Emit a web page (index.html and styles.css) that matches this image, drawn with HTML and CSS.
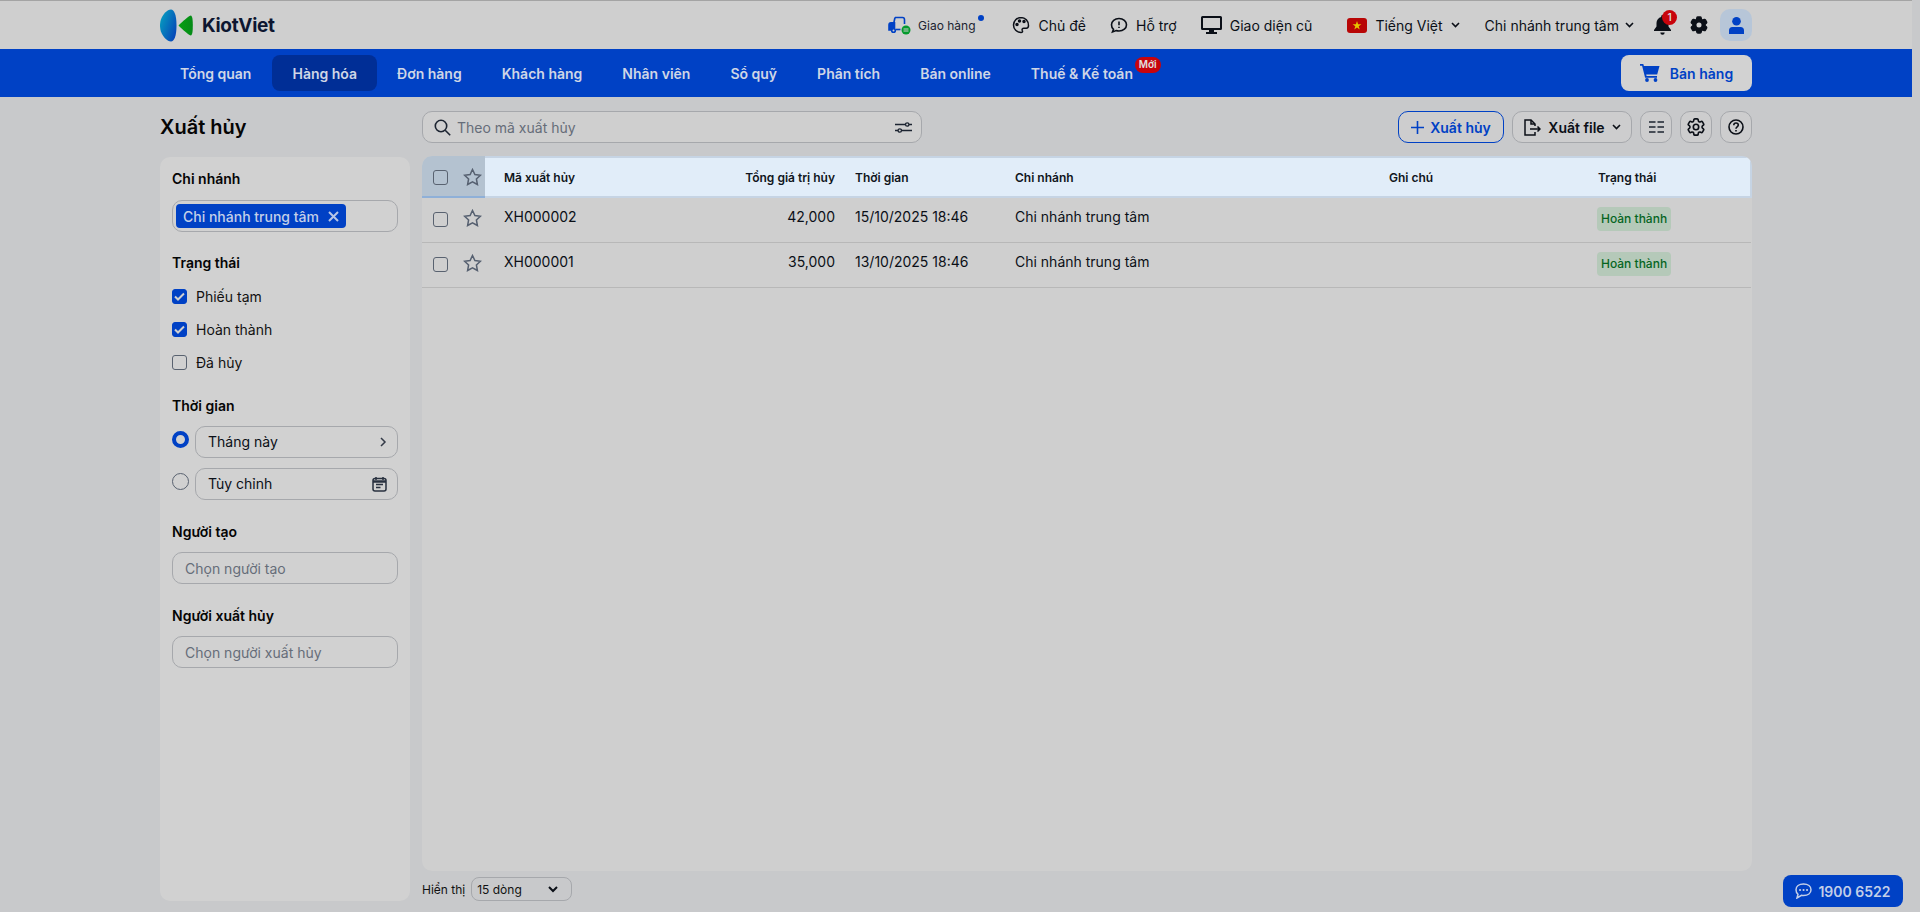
FILE: index.html
```html
<!DOCTYPE html>
<html lang="vi">
<head>
<meta charset="utf-8">
<title>Xuất hủy</title>
<link rel="stylesheet" href="styles.css">
</head>
<body>
<div class="app">
  <header class="top">
    <div class="logo">
      <svg width="33" height="33" viewBox="0 0 33 33"><defs><linearGradient id="lg" x1="0" y1="0" x2="1" y2="0.700"><stop offset="0" stop-color="#06a6c0"/><stop offset="1" stop-color="#0648b8"/></linearGradient><linearGradient id="lg2" x1="0" y1="0" x2="1" y2="0"><stop offset="0" stop-color="#05a010"/><stop offset="1" stop-color="#068a18"/></linearGradient></defs><path d="M11 .5C14 1 16.500 5 16.500 16.500S14 32 11 32.500C7 32.500 3.500 28 1.500 24-.5 20-.5 13 1.500 9 3.500 5 7 .5 11 .5Z" fill="url(#lg)"/><path d="M31 6.500C32.500 7.500 32.800 11 32.800 16.500S32.500 25.500 31 26.500C29 26.500 22 20 18.500 16.500 22 13 29 6.500 31 6.500Z" fill="url(#lg2)"/></svg>
      <span class="logo-name">KiotViet</span>
    </div>
    <div class="top-tools">
      <a class="tool tool-ship">
        <svg width="23" height="20" viewBox="0 0 23 20" fill="none" stroke="#0041c5" stroke-width="1.600"><path d="M7 2.500h7.500c1.300 0 2 .8 2 2.200V9"/><path d="M7 2.500 5.800 8"/><path d="M1 10c0-1.300.7-2.200 2-2.200h3.500V15H1Z" fill="#0041c5"/><path d="M8 14.500h4.500"/><circle cx="5.500" cy="15.500" r="1.800" fill="#cfcfcf"/><circle cx="18" cy="15" r="4.500" fill="#039a2c" stroke="none"/><path d="M15.500 14h5M15.500 16h5" stroke="#cfcfcf" stroke-width="1"/></svg>
        <span class="ship-text">Giao hàng</span><i class="ship-dot"></i>
      </a>
      <a class="tool tool-theme">
        <svg width="18" height="18" viewBox="0 0 18 18" fill="none" stroke="#0b0f17" stroke-width="1.500"><path d="M9 1.500a7.500 7.500 0 1 0 0 15c1.500 0 1.800-1 1.300-2-.6-1.300.2-2.300 1.500-2.300h2.500c1.300 0 2.200-1 2.200-2.700C16.500 5 13.300 1.500 9 1.500Z"/><circle cx="5" cy="8.500" r="1" fill="#0b0f17"/><circle cx="7.500" cy="5" r="1" fill="#0b0f17"/><circle cx="12" cy="5.500" r="1" fill="#0b0f17"/></svg>
        <span>Chủ đề</span>
      </a>
      <a class="tool tool-help">
        <svg width="18" height="18" viewBox="0 0 18 18" fill="none" stroke="#0b0f17" stroke-width="1.600"><path d="M9 2.500c4.300 0 7.500 2.700 7.500 6.200S13.300 15 9 15c-1 0-2-.2-2.800-.4L2.500 16l1-2.700C2 12.100 1.500 10.500 1.500 8.700c0-3.500 3.200-6.200 7.500-6.200Z"/><path d="M9 5.500v3.800M9 10.800v1.300"/></svg>
        <span>Hỗ trợ</span>
      </a>
      <a class="tool tool-old">
        <svg width="21" height="18" viewBox="0 0 21 18" fill="#0b0f17"><path d="M1.500 0h18A1.500 1.500 0 0 1 21 1.500v11a1.500 1.500 0 0 1-1.500 1.500h-18A1.500 1.500 0 0 1 0 12.500v-11A1.500 1.500 0 0 1 1.500 0Zm.5 2v10h17V2Z"/><path d="M8 14h5v2h3v2H5v-2h3Z"/></svg>
        <span>Giao diện cũ</span>
      </a>
      <a class="tool tool-lang">
        <svg class="flag" width="20" height="15" viewBox="0 0 20 15"><rect width="20" height="15" rx="3" fill="#b80606"/><path d="m10 3 1.100 3.200h3.300l-2.700 2 1 3.200-2.700-2-2.700 2 1-3.200-2.700-2h3.300Z" fill="#e6c400"/></svg>
        <span>Tiếng Việt</span>
        <svg class="chev" width="9" height="6" viewBox="0 0 9 6" fill="none" stroke="#0b0f17" stroke-width="1.600"><path d="m1 1 3.500 3.500L8 1"/></svg>
      </a>
      <a class="tool tool-branch">
        <span>Chi nhánh trung tâm</span>
        <svg class="chev" width="9" height="6" viewBox="0 0 9 6" fill="none" stroke="#0b0f17" stroke-width="1.600"><path d="m1 1 3.500 3.500L8 1"/></svg>
      </a>
      <a class="bell">
        <svg width="17" height="20" viewBox="0 0 17 20" fill="#0b0f17"><path d="M8.500 0c.8 0 1.300.6 1.300 1.300v.6C12.600 2.500 14.500 5 14.500 8v3.500L17 15v1H0v-1l2.500-3.500V8c0-3 1.900-5.500 4.700-6.100v-.6C7.200.6 7.700 0 8.500 0ZM6.300 17.500h4.400a2.200 2.200 0 0 1-4.400 0Z"/></svg>
        <b class="bell-badge">1</b>
      </a>
      <svg class="gear" width="18" height="18" viewBox="2 2 20 20" fill="#0b0f17" stroke="#0b0f17" stroke-width="1.500"><path d="M9.594 3.940c.09-.542.56-.94 1.110-.94h2.593c.55 0 1.020.398 1.110.94l.213 1.281c.063.374.313.686.645.870.074.040.147.083.220.127.324.196.720.257 1.075.124l1.217-.456a1.125 1.125 0 011.370.490l1.296 2.247a1.125 1.125 0 01-.260 1.431l-1.003.827c-.293.240-.438.613-.431.992a6.759 6.759 0 010 .255c-.007.378.138.750.430.990l1.005.828c.424.350.534.954.260 1.430l-1.298 2.247a1.125 1.125 0 01-1.369.491l-1.217-.456c-.355-.133-.750-.072-1.076.124a6.570 6.570 0 01-.220.128c-.331.183-.581.495-.644.869l-.213 1.280c-.090.543-.560.941-1.110.941h-2.594c-.550 0-1.020-.398-1.110-.940l-.213-1.281c-.062-.374-.312-.686-.644-.870a6.520 6.520 0 01-.220-.127c-.325-.196-.720-.257-1.076-.124l-1.217.456a1.125 1.125 0 01-1.369-.490l-1.297-2.247a1.125 1.125 0 01.260-1.431l1.004-.827c.292-.240.437-.613.430-.992a6.932 6.932 0 010-.255c.007-.378-.138-.750-.430-.990l-1.004-.828a1.125 1.125 0 01-.260-1.430l1.297-2.247a1.125 1.125 0 011.370-.491l1.216.456c.356.133.751.072 1.076-.124.072-.044.146-.087.220-.128.332-.183.582-.495.644-.869l.214-1.281z"/><circle cx="12" cy="12" r="2.800" fill="#cfcfcf" stroke="none"/></svg>
      <a class="avatar">
        <svg width="15" height="17" viewBox="0 0 15 17" fill="#0041c5"><circle cx="7.500" cy="4.300" r="4.300"/><path d="M3.500 10h8a3.500 3.500 0 0 1 3.500 3.500V17H0v-3.500A3.500 3.500 0 0 1 3.500 10Z"/></svg>
      </a>
    </div>
  </header>

  <nav class="menu">
    <div class="menu-items">
      <a class="menu-item menu-first">Tổng quan</a>
      <a class="menu-item is-active">Hàng hóa</a>
      <a class="menu-item">Đơn hàng</a>
      <a class="menu-item">Khách hàng</a>
      <a class="menu-item">Nhân viên</a>
      <a class="menu-item">Sổ quỹ</a>
      <a class="menu-item">Phân tích</a>
      <a class="menu-item">Bán online</a>
      <a class="menu-item menu-tax">Thuế &amp; Kế toán<b class="new-badge">Mới</b></a>
    </div>
    <a class="sell-btn">
      <svg width="20" height="18" viewBox="0 0 20 18" fill="#0041c5"><path d="M0 0h3.300l.6 2H19.500l-2.300 8.500H6.200l.4 1.600h10.400v1.700H5.100L2.100 1.700H0Z"/><circle cx="7" cy="16" r="1.900"/><circle cx="15.500" cy="16" r="1.900"/></svg>
      <span>Bán hàng</span>
    </a>
  </nav>

  <main class="page">
    <aside class="side-col">
      <h1 class="title">Xuất hủy</h1>
      <div class="filters">
        <section class="group group-branch">
          <h3 class="label">Chi nhánh</h3>
          <div class="field field-chip">
            <span class="chip">Chi nhánh trung tâm
              <svg width="11" height="11" viewBox="0 0 11 11" fill="none" stroke="#b7c6e6" stroke-width="2"><path d="m1 1 9 9M10 1l-9 9"/></svg>
            </span>
          </div>
        </section>
        <section class="group group-status">
          <h3 class="label">Trạng thái</h3>
          <label class="check"><span class="box is-on"><svg width="11" height="9" viewBox="0 0 11 9" fill="none" stroke="#d0d0d0" stroke-width="2"><path d="m1 4.500 3 3 6-6"/></svg></span>Phiếu tạm</label>
          <label class="check"><span class="box is-on"><svg width="11" height="9" viewBox="0 0 11 9" fill="none" stroke="#d0d0d0" stroke-width="2"><path d="m1 4.500 3 3 6-6"/></svg></span>Hoàn thành</label>
          <label class="check"><span class="box"></span>Đã hủy</label>
        </section>
        <section class="group group-time">
          <h3 class="label">Thời gian</h3>
          <div class="time-row">
            <span class="radio is-on"></span>
            <div class="field field-time"><span>Tháng này</span>
              <svg width="7" height="10" viewBox="0 0 7 10" fill="none" stroke="#333a47" stroke-width="1.500"><path d="m1 1 4 4-4 4"/></svg>
            </div>
          </div>
          <div class="time-row">
            <span class="radio"></span>
            <div class="field field-time"><span>Tùy chỉnh</span>
              <svg width="15" height="16" viewBox="0 0 15 16" fill="none" stroke="#28313f" stroke-width="1.500"><rect x="1" y="2.500" width="13" height="12.500" rx="2"/><path d="M1 5.500h13" stroke-width="2.500"/><path d="M4 1v3M11 1v3" /><path d="M4 8.500h7M4 11.500h4.500" stroke-width="1.300"/></svg>
            </div>
          </div>
        </section>
        <section class="group group-user">
          <h3 class="label">Người tạo</h3>
          <div class="field field-input">Chọn người tạo</div>
        </section>
        <section class="group group-user">
          <h3 class="label">Người xuất hủy</h3>
          <div class="field field-input">Chọn người xuất hủy</div>
        </section>
      </div>
    </aside>

    <div class="content">
      <div class="toolbar">
        <div class="search">
          <svg width="17" height="17" viewBox="0 0 17 17" fill="none" stroke="#1c2431" stroke-width="1.600"><circle cx="7" cy="7" r="5.700"/><path d="m11.200 11.200 5 5"/></svg>
          <span class="search-text">Theo mã xuất hủy</span>
          <svg class="search-tune" width="17" height="13" viewBox="0 0 17 13" fill="none" stroke="#1c2431" stroke-width="1.300"><path d="M0 3.500h10.500M14 3.500h3M0 9.500h3M6.500 9.500H17"/><circle cx="12.200" cy="3.500" r="1.700"/><circle cx="4.800" cy="9.500" r="1.700"/></svg>
        </div>
        <div class="actions">
          <a class="btn btn-add">
            <svg width="13" height="13" viewBox="0 0 13 13" fill="none" stroke="#0041c5" stroke-width="1.600"><path d="M6.500 0v13M0 6.500h13"/></svg>
            Xuất hủy
          </a>
          <a class="btn btn-file">
            <svg width="18" height="17" viewBox="0 0 18 17" fill="none" stroke="#0b0f17" stroke-width="1.500"><path d="M12 7V5L8 1H2v15h10v-3"/><path d="M8 1v4h4"/><path d="M7 10h10M14.500 7.500 17 10l-2.500 2.500"/></svg>
            Xuất file
            <svg width="9" height="6" viewBox="0 0 9 6" fill="none" stroke="#0b0f17" stroke-width="1.600"><path d="m1 1 3.500 3.500L8 1"/></svg>
          </a>
          <a class="btn btn-icon">
            <svg width="15" height="12" viewBox="0 0 15 12" stroke="#1c2431" stroke-width="1.600"><path d="M0 1h6.500M8.500 1H15M0 6h6.500M8.500 6H15M0 11h6.500M8.500 11H15"/></svg>
          </a>
          <a class="btn btn-icon">
            <svg width="18" height="18" viewBox="2 2 20 20" fill="none" stroke="#0b0f17" stroke-width="1.800"><path d="M9.594 3.940c.09-.542.56-.94 1.110-.94h2.593c.55 0 1.020.398 1.110.94l.213 1.281c.063.374.313.686.645.870.074.040.147.083.220.127.324.196.720.257 1.075.124l1.217-.456a1.125 1.125 0 011.370.490l1.296 2.247a1.125 1.125 0 01-.260 1.431l-1.003.827c-.293.240-.438.613-.431.992a6.759 6.759 0 010 .255c-.007.378.138.750.430.990l1.005.828c.424.350.534.954.260 1.430l-1.298 2.247a1.125 1.125 0 01-1.369.491l-1.217-.456c-.355-.133-.750-.072-1.076.124a6.570 6.570 0 01-.220.128c-.331.183-.581.495-.644.869l-.213 1.280c-.090.543-.560.941-1.110.941h-2.594c-.550 0-1.020-.398-1.110-.940l-.213-1.281c-.062-.374-.312-.686-.644-.870a6.520 6.520 0 01-.220-.127c-.325-.196-.720-.257-1.076-.124l-1.217.456a1.125 1.125 0 01-1.369-.490l-1.297-2.247a1.125 1.125 0 01.260-1.431l1.004-.827c.292-.240.437-.613.430-.992a6.932 6.932 0 010-.255c.007-.378-.138-.750-.430-.990l-1.004-.828a1.125 1.125 0 01-.260-1.430l1.297-2.247a1.125 1.125 0 011.370-.491l1.216.456c.356.133.751.072 1.076-.124.072-.044.146-.087.220-.128.332-.183.582-.495.644-.869l.214-1.281z"/><circle cx="12" cy="12" r="3"/></svg>
          </a>
          <a class="btn btn-icon">
            <svg width="16" height="16" viewBox="0 0 16 16" fill="none" stroke="#0b0f17" stroke-width="1.600"><circle cx="8" cy="8" r="7"/><path d="M5.800 6.200C5.800 4.900 6.800 4 8 4s2.300.9 2.300 2.100c0 1.800-2.300 1.800-2.300 3.600M8 11v1.500"/></svg>
          </a>
        </div>
      </div>

      <div class="table-panel">
        <table class="grid">
          <colgroup>
            <col class="c-pick"><col class="c-code"><col class="c-total"><col class="c-time"><col class="c-branch"><col class="c-note"><col class="c-status">
          </colgroup>
          <thead>
            <tr>
              <th class="pick"><span class="pick-wrap"><span class="box"></span><svg width="19" height="18" viewBox="0 0 19 18" fill="none" stroke="#566070" stroke-width="1.500"><path d="m9.500 1.500 2.400 5 5.500.7-4 3.800 1 5.500-4.900-2.700-4.900 2.700 1-5.500-4-3.800 5.500-.7Z"/></svg></span></th>
              <th class="code">Mã xuất hủy</th>
              <th class="num">Tổng giá trị hủy</th>
              <th>Thời gian</th>
              <th>Chi nhánh</th>
              <th>Ghi chú</th>
              <th>Trạng thái</th>
            </tr>
          </thead>
          <tbody>
            <tr>
              <td class="pick"><span class="pick-wrap"><span class="box"></span><svg class="star" width="19" height="18" viewBox="0 0 19 18" fill="none" stroke="#566070" stroke-width="1.500"><path d="m9.500 1.500 2.400 5 5.500.7-4 3.800 1 5.500-4.900-2.700-4.900 2.700 1-5.500-4-3.800 5.500-.7Z"/></svg></span></td>
              <td class="code">XH000002</td>
              <td class="num">42,000</td>
              <td>15/10/2025 18:46</td>
              <td>Chi nhánh trung tâm</td>
              <td></td>
              <td class="status"><span class="tag">Hoàn thành</span></td>
            </tr>
            <tr>
              <td class="pick"><span class="pick-wrap"><span class="box"></span><svg class="star" width="19" height="18" viewBox="0 0 19 18" fill="none" stroke="#566070" stroke-width="1.500"><path d="m9.500 1.500 2.400 5 5.500.7-4 3.800 1 5.500-4.900-2.700-4.900 2.700 1-5.500-4-3.800 5.500-.7Z"/></svg></span></td>
              <td class="code">XH000001</td>
              <td class="num">35,000</td>
              <td>13/10/2025 18:46</td>
              <td>Chi nhánh trung tâm</td>
              <td></td>
              <td class="status"><span class="tag">Hoàn thành</span></td>
            </tr>
          </tbody>
        </table>
      </div>

      <div class="pager">
        <span>Hiển thị</span>
        <div class="page-size"><span>15 dòng</span>
          <svg width="10" height="7" viewBox="0 0 10 7" fill="none" stroke="#0b0f17" stroke-width="2"><path d="m1 1 4 4 4-4"/></svg>
        </div>
      </div>
    </div>
  </main>
</div>
<a class="hotline">
  <svg width="17" height="16" viewBox="0 0 17 16" fill="none" stroke="#c3cfe8" stroke-width="1.500"><path d="M8.500 1C13 1 16 3.500 16 6.800s-3 5.700-7.500 5.700c-.7 0-1.400-.1-2-.2L2 15l1-3.700C1.700 10.200 1 8.600 1 6.800 1 3.500 4 1 8.500 1Z"/><path d="M5 7h.1M8.500 7h.1M12 7h.1" stroke-width="2" stroke-linecap="round"/></svg>
  1900 6522
</a>
</body>
</html>
```
FILE: styles.css
```css
* { box-sizing: border-box; }
html, body { margin: 0; height: 100%; overflow: hidden; }
body {
  font-family: Inter, "Noto Sans", "Liberation Sans", sans-serif;
  font-size: 14px;
  color: #0b0f17;
  background: #c8c9cb;
}
h1, h3 { margin: 0; }
a { color: inherit; text-decoration: none; }

.app { width: 1912px; height: 912px; display: flex; flex-direction: column; }

/* top bar */
.top {
  height: 49px;
  flex: none;
  border-top: 1px solid #a4a4a4;
  background: #cfcfcf;
  padding: 0 160px;
  display: flex;
  align-items: center;
  justify-content: space-between;
}
.logo { display: flex; align-items: center; gap: 9px; }
.logo-name { font-size: 19px; font-weight: 700; color: #0d1630; letter-spacing: -.3px; }
.top-tools { display: flex; align-items: center; }
.tool { display: flex; align-items: center; gap: 8px; white-space: nowrap; font-size: 14px; }
.tool-ship { position: relative; gap: 7px; }
.ship-text { font-size: 12px; color: #1c2431; }
.ship-dot { position: absolute; right: -8px; top: 0; width: 6px; height: 6px; border-radius: 50%; background: #0041c5; }
.tool-theme { margin-left: 36px; gap: 9px; }
.tool-help { margin-left: 24px; }
.tool-old { margin-left: 24px; }
.tool-lang { margin-left: 35px; }
.tool-branch { margin-left: 25px; gap: 6px; }
.bell { position: relative; margin-left: 20px; display: flex; }
.bell-badge {
  position: absolute; left: 8px; top: -5px;
  width: 15px; height: 15px; border-radius: 50%;
  background: #c8040c; color: #d8d8d8;
  font-size: 10px; font-weight: 600; line-height: 15px; text-align: center;
}
.gear { margin-left: 19px; }
.avatar {
  margin-left: 12px; width: 32px; height: 32px; border-radius: 10px;
  background: #b7c6d8; display: flex; align-items: center; justify-content: center;
}

/* main menu */
.menu {
  height: 48px;
  flex: none;
  background: #0041c5;
  padding: 0 160px;
  display: flex;
  align-items: center;
  justify-content: space-between;
}
.menu-items { display: flex; align-items: center; }
.menu-item {
  height: 36px; padding: 0 20px; border-radius: 8px;
  display: flex; align-items: center;
  color: #cfd6e6; font-weight: 600; font-size: 14px; white-space: nowrap;
}
.menu-first { padding-right: 21px; }
.menu-item.is-active { background: #002e96; }
.menu-tax { position: relative; }
.new-badge {
  position: absolute; left: 124px; top: 2px;
  height: 16px; padding: 0 4px; border-radius: 8px;
  background: #c8040c; color: #e0e0e0;
  font-size: 10px; font-weight: 600; line-height: 15px;
}
.sell-btn {
  width: 131px; height: 36px; border-radius: 8px; background: #d2d2d2;
  display: flex; align-items: center; justify-content: center; gap: 10px;
  color: #0041c5; font-weight: 600;
}

/* page */
.page { flex: 1; min-height: 0; padding: 14px 160px 11px; display: flex; gap: 12px; }
.side-col { width: 250px; flex: none; display: flex; flex-direction: column; }
.title { font-size: 20px; font-weight: 600; line-height: 30px; color: #050505; margin: 1px 0 15px; }
.filters { flex: 1; background: #d1d1d1; border-radius: 10px; padding: 12px 12px; }
.label { font-size: 14px; font-weight: 600; line-height: 20px; color: #050505; }
.field { border: 1px solid #a6a8ac; border-radius: 10px; height: 32px; display: flex; align-items: center; }
.group-branch .field { margin-top: 11px; }
.field-chip { padding: 0 3px; }
.chip {
  height: 24px; padding: 0 7px; border-radius: 4px; background: #0041c5;
  color: #c3cfe8; display: flex; align-items: center; gap: 9px; font-size: 14px; font-weight: 500; white-space: nowrap;
}
.group-status { margin-top: 21px; }
.group-status .label { margin-bottom: 7px; }
.check { height: 33px; display: flex; align-items: center; gap: 9px; line-height: 20px; color: #111; }
.box {
  width: 15px; height: 15px; flex: none; border: 1.500px solid #596270; border-radius: 3px;
  display: inline-flex; align-items: center; justify-content: center;
}
.box.is-on { background: #0041c5; border-color: #0041c5; }
.group-time { margin-top: 17px; }
.group-time .label { margin-bottom: 10px; }
.time-row { display: flex; align-items: flex-start; gap: 6px; margin-bottom: 10px; }
.radio { width: 17px; height: 17px; margin-top: 5px; flex: none; border: 1.500px solid #596270; border-radius: 50%; }
.radio.is-on { border: 4.500px solid #0041c5; }
.field-time { flex: 1; padding: 0 10px 0 12px; justify-content: space-between; line-height: 20px; }
.group-user { margin-top: 22px; }
.group-user .label { margin-bottom: 10px; }
.field-input { padding: 0 12px; color: #666d79; }

/* content */
.content { flex: 1; min-width: 0; display: flex; flex-direction: column; }
.toolbar { display: flex; align-items: center; justify-content: space-between; height: 32px; margin-bottom: 13px; }
.search {
  width: 500px; height: 32px; border: 1px solid #a6a8ac; border-radius: 10px; background: #cfcfcf;
  padding: 0 9px 0 11px; display: flex; align-items: center; gap: 6px;
}
.search-text { color: #666d79; flex: 1; }
.actions { display: flex; gap: 8px; }
.btn {
  height: 32px; border: 1px solid #a6a8ac; border-radius: 10px; background: #cdcdce;
  display: flex; align-items: center; justify-content: center; font-weight: 600; white-space: nowrap;
}
.btn-add { width: 106px; border-color: #0041c5; color: #0041c5; gap: 6px; }
.btn-file { width: 120px; gap: 7px; }
.btn-icon { width: 32px; }

.table-panel { flex: 1; background: #cfcfcf; border-radius: 10px; overflow: hidden; }
.grid { width: 100%; border-collapse: collapse; table-layout: fixed; }
.c-pick { width: 63px; }
.c-code { width: 203px; }
.c-total { width: 151px; }
.c-time { width: 160px; }
.c-branch { width: 374px; }
.c-note { width: 209px; }
.grid th {
  height: 40px; background: #e1edf9; border-top: 2px solid #c6d4e4; border-bottom: 2px solid #c6d4e4;
  text-align: left; font-size: 12px; font-weight: 600; padding: 0 16px; color: #101520;
}
.grid th:last-child { border-right: 2px solid #c6d4e4; }
.grid th.pick { background: #b4c2d0; padding: 0; border-top-color: #b4c2d0; border-bottom-color: #8fb0d8; }
.grid td { height: 45px; border-bottom: 1px solid #b8b8b8; padding: 0 16px 6px; font-size: 14px; color: #0b0f17; }
.grid td.pick { padding: 0; }
.grid .code { padding-left: 19px; }
.grid .num { text-align: right; padding-right: 4px; }
.grid td.status { padding-bottom: 4px; }
.pick-wrap { display: flex; align-items: center; gap: 15px; padding-left: 11px; }
.star { position: relative; top: -2px; }
.tag {
  display: inline-block; height: 24px; padding: 0 4px; border-radius: 4px; margin: 2px 0 0 -1px;
  background: #b5c9b9; color: #06651f; font-size: 12px; font-weight: 500; line-height: 24px;
}

.pager { height: 24px; margin-top: 6px; flex: none; display: flex; align-items: center; gap: 6px; font-size: 12px; color: #111; }
.page-size {
  width: 101px; height: 24px; border: 1px solid #a6a8ac; border-radius: 8px;
  padding: 0 13px 0 5px; display: flex; align-items: center; justify-content: space-between;
}

.hotline {
  position: fixed; left: 1783px; top: 875px; width: 120px; height: 32px; border-radius: 8px;
  background: #0041c5; color: #c3cfe8; font-weight: 600;
  display: flex; align-items: center; justify-content: center; gap: 6px;
}
```
